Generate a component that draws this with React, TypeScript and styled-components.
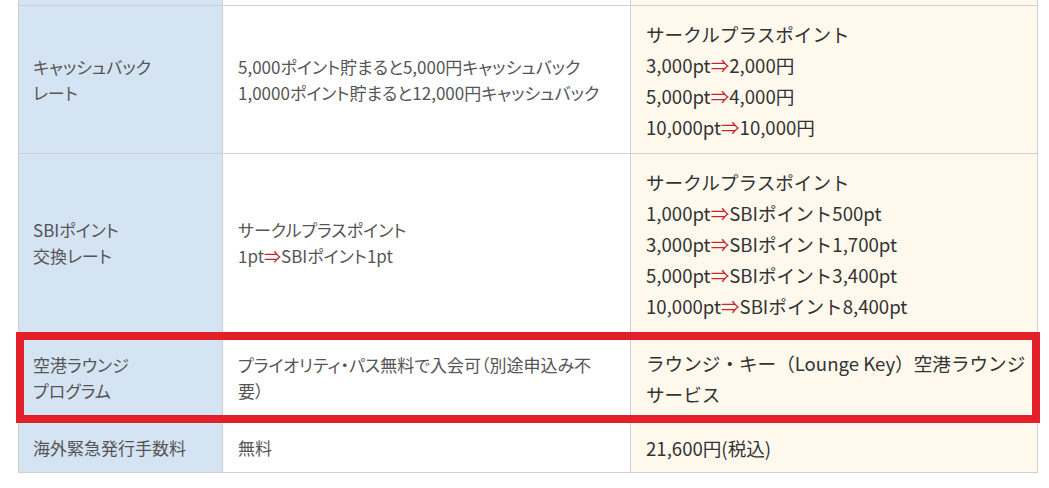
import React from 'react';
import styled, { createGlobalStyle } from 'styled-components';

const GlobalStyle = createGlobalStyle`
  html, body {
    margin: 0;
    padding: 0;
    background: #fff;
  }
  body {
    font-family: "Noto Sans CJK JP", "Noto Sans", sans-serif;
  }
`;

type RowData = {
  label: string[];
  desc: React.ReactNode[];
  card: React.ReactNode[];
  height: number;
  highlight?: boolean;
};

const Arrow = () => <Red>⇒</Red>;

const rows: RowData[] = [
  {
    label: ['キャッシュバック', 'レート'],
    desc: ['5,000ポイント貯まると5,000円キャッシュバック', '1,0000ポイント貯まると12,000円キャッシュバック'],
    card: [
      'サークルプラスポイント',
      <>3,000pt<Arrow />2,000円</>,
      <>5,000pt<Arrow />4,000円</>,
      <>10,000pt<Arrow />10,000円</>,
    ],
    height: 148,
  },
  {
    label: ['SBIポイント', '交換レート'],
    desc: ['サークルプラスポイント', <>1pt<Arrow />SBIポイント1pt</>],
    card: [
      'サークルプラスポイント',
      <>1,000pt<Arrow />SBIポイント500pt</>,
      <>3,000pt<Arrow />SBIポイント1,700pt</>,
      <>5,000pt<Arrow />SBIポイント3,400pt</>,
      <>10,000pt<Arrow />SBIポイント8,400pt</>,
    ],
    height: 179,
  },
  {
    label: ['空港ラウンジ', 'プログラム'],
    desc: ['プライオリティ・パス無料で入会可（別途申込み不要）'],
    card: ['ラウンジ・キー（Lounge Key）空港ラウンジサービス'],
    height: 90,
    highlight: true,
  },
  {
    label: ['海外緊急発行手数料'],
    desc: ['無料'],
    card: ['21,600円(税込)'],
    height: 50,
  },
];

const App = () => (
  <>
    <GlobalStyle />
    <Table>
      <Row $h={6}>
        <LabelCell />
        <DescCell />
        <CardCell />
      </Row>
      {rows.map((r, i) => (
        <Row key={i} $h={r.height} $highlight={r.highlight}>
          <LabelCell>
            {r.label.map((l, j) => (
              <Line key={j}>{l}</Line>
            ))}
          </LabelCell>
          <DescCell>
            {r.desc.map((d, j) => (
              <Line key={j}>{d}</Line>
            ))}
          </DescCell>
          <CardCell>
            {r.card.map((c, j) => (
              <Line key={j}>{c}</Line>
            ))}
          </CardCell>
        </Row>
      ))}
    </Table>
  </>
);

export default App;

const Table = styled.div`
  width: 1020px;
  margin-left: 18px;
  box-sizing: border-box;
`;

const Row = styled.div<{ $h: number; $highlight?: boolean }>`
  position: relative;
  display: grid;
  grid-template-columns: 204px 408px 407px;
  height: ${(p) => p.$h}px;
  border-right: 1px solid #cfcfcf;
  border-bottom: 1px solid #cfcfcf;
  box-sizing: border-box;

  ${(p) =>
    p.$highlight &&
    `
    &::after {
      content: '';
      position: absolute;
      top: -1px;
      left: -2px;
      right: -3px;
      bottom: -1px;
      border: 8px solid #e3202a;
      pointer-events: none;
    }
  `}
`;

const Cell = styled.div`
  display: flex;
  flex-direction: column;
  justify-content: center;
  border-left: 1px solid #cfcfcf;
  box-sizing: border-box;
  overflow: hidden;
`;

const LabelCell = styled(Cell)`
  background: #d5e4f3;
  padding: 0 8px 0 14px;
  color: #555;
  font-size: 17px;
  line-height: 26px;
  font-feature-settings: 'palt';
`;

const DescCell = styled(Cell)`
  background: #fff;
  padding: 0 30px 0 15px;
  color: #555;
  font-size: 17px;
  line-height: 26px;
  font-feature-settings: 'palt';
`;

const CardCell = styled(Cell)`
  background: #fef9ec;
  padding: 0 8px 0 15px;
  color: #333;
  font-size: 18.6px;
  line-height: 31px;
`;

const Line = styled.div`
  white-space: normal;
`;

const Red = styled.span`
  color: #c8262e;
`;
